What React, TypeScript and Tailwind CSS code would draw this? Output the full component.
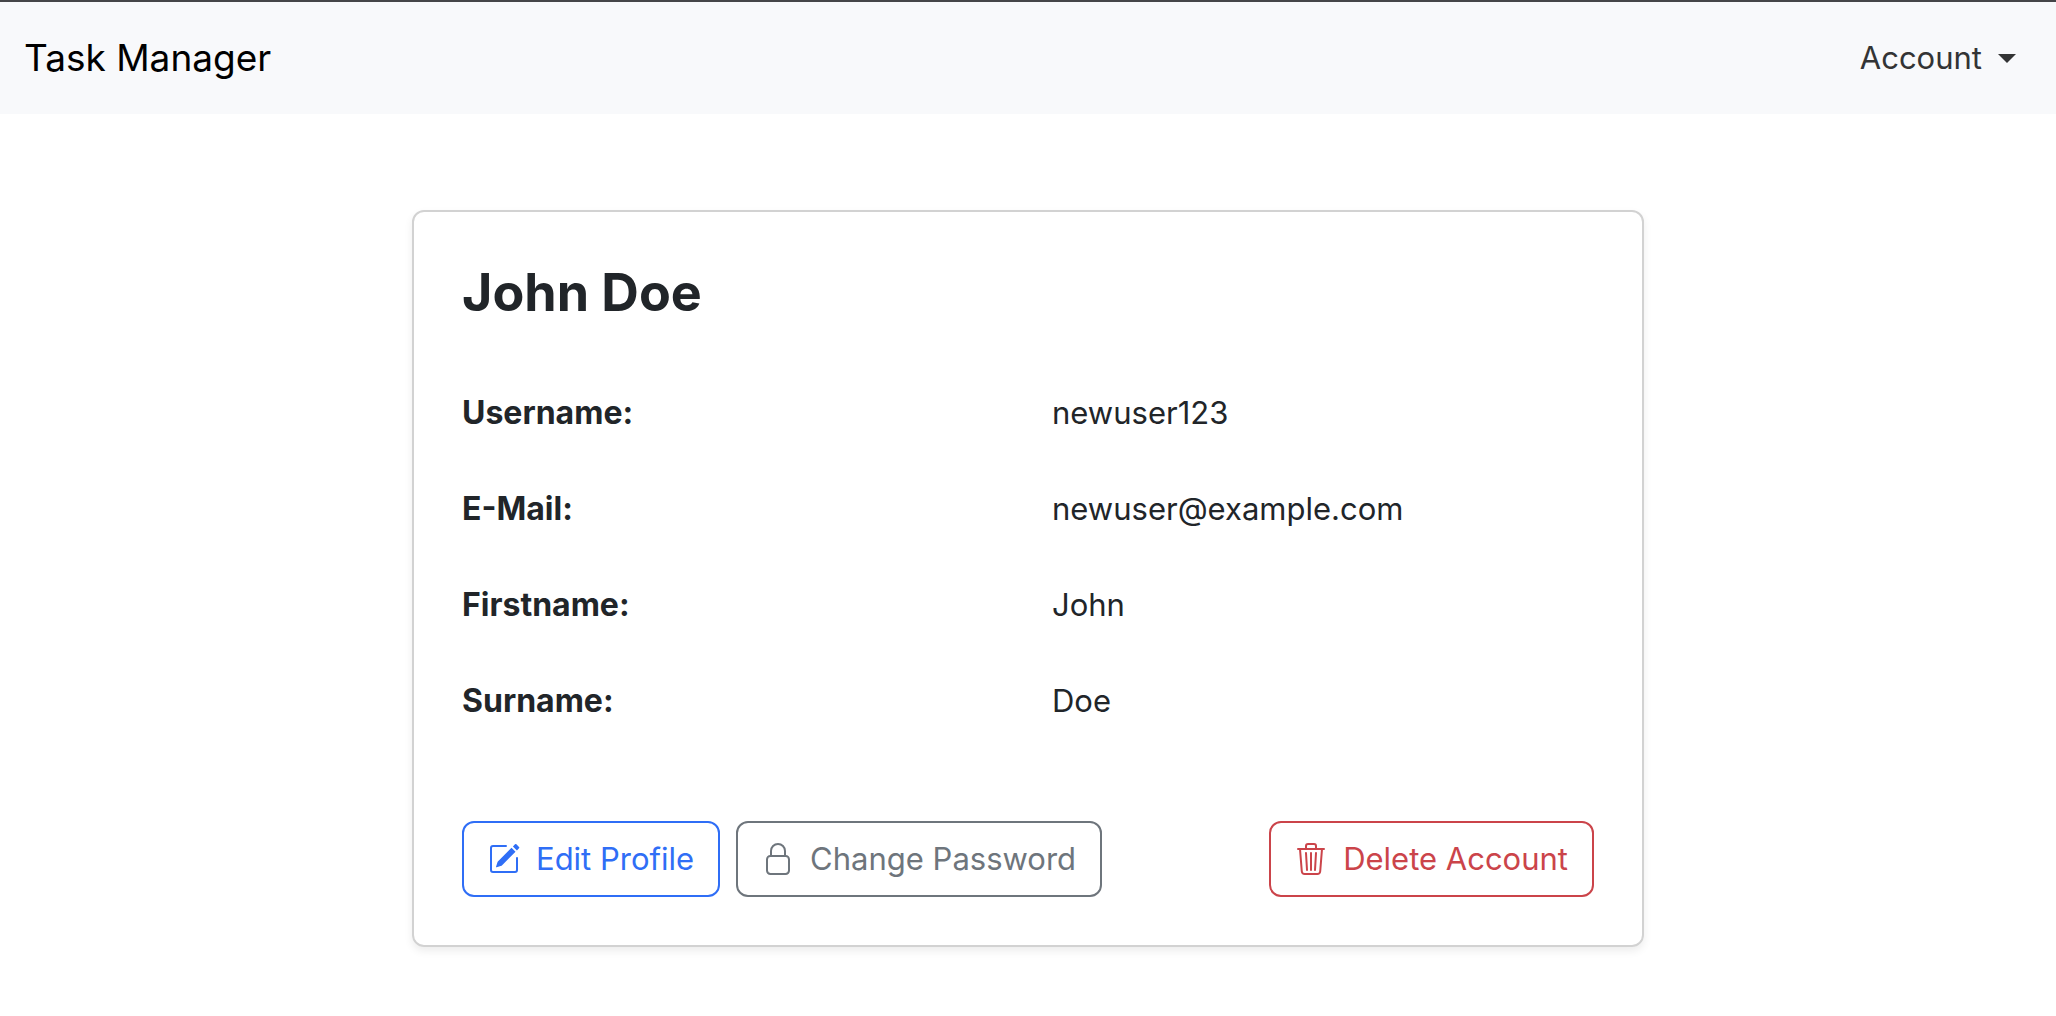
import { BsPencilSquare, BsTrash3 } from "react-icons/bs";
import type { ReactNode } from "react";

const details = [
  { label: "Username:", value: "newuser123" },
  { label: "E-Mail:", value: "newuser@example.com" },
  { label: "Firstname:", value: "John" },
  { label: "Surname:", value: "Doe" },
];

function LockIcon() {
  return (
    <svg viewBox="0 0 16 16" className="size-8" fill="none" stroke="currentColor" aria-hidden="true">
      <rect x="2.5" y="6.5" width="11" height="9" rx="1.7" />
      <path d="M4.5 6.5V4a3.5 3.5 0 0 1 7 0v2.5" />
    </svg>
  );
}

function ActionButton({ className, icon, children }: { className: string; icon: ReactNode; children: ReactNode }) {
  return (
    <button
      type="button"
      className={`flex items-center gap-4 rounded-xl border-2 px-6 py-3 leading-12 whitespace-nowrap ${className}`}
    >
      {icon}
      {children}
    </button>
  );
}

export default function App() {
  return (
    <div className="min-h-screen bg-white font-['Inter',sans-serif] text-[31px] leading-12 text-[#212529]">
      <nav className="flex items-center justify-between border-t-2 border-[#454548] bg-[#f8f9fb] px-6 py-4">
        <a href="#" className="py-2.5 text-[37px] leading-15 text-black">
          Task Manager
        </a>
        <button type="button" className="flex items-center gap-4 px-4 py-4 text-[#333435]">
          Account
          <span className="border-x-9 border-t-9 border-x-transparent border-t-current" />
        </button>
      </nav>
      <main className="mx-auto mt-24 w-3/5 max-w-[1232px] rounded-xl border-2 border-[#d2d2d2] p-12 shadow-[0_4px_8px_rgba(0,0,0,0.075)]">
        <h1 className="text-[52px] leading-[65px] font-bold">John Doe</h1>
        <dl className="mt-16">
          {details.map((d) => (
            <div key={d.label} className="grid grid-cols-2 gap-x-12 pb-12">
              <dt className="text-[32px] leading-12 font-bold">{d.label}</dt>
              <dd>{d.value}</dd>
            </div>
          ))}
        </dl>
        <div className="mt-12 flex flex-wrap items-center justify-between gap-4">
          <div className="flex flex-wrap gap-4">
            <ActionButton className="border-[#2f6ef6] text-[#2f6ef6]" icon={<BsPencilSquare className="size-8" />}>
              Edit Profile
            </ActionButton>
            <ActionButton className="border-[#6e757c] text-[#6e757c]" icon={<LockIcon />}>
              Change Password
            </ActionButton>
          </div>
          <ActionButton className="border-[#cb444a] text-[#cb444a]" icon={<BsTrash3 className="size-8" />}>
            Delete Account
          </ActionButton>
        </div>
      </main>
    </div>
  );
}
